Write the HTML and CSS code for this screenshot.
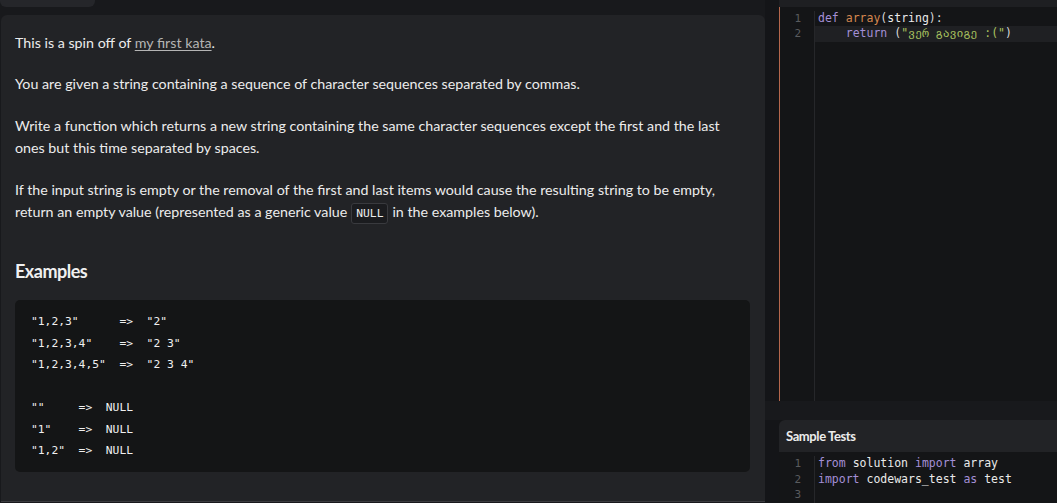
FILE: index.html
```html
<!DOCTYPE html>
<html>
<head>
<meta charset="utf-8">
<link rel="stylesheet" href="styles.css">
</head>
<body>
<div class="page">
  <div class="left">
    <div class="tab"></div>
    <div class="panel">
      <p>This is a spin off of <a class="link" href="#">my first kata</a>.</p>
      <p>You are given a string containing a sequence of character sequences separated by commas.</p>
      <p>Write a function which returns a new string containing the same character sequences except the first and the last ones but this time separated by spaces.</p>
      <p>If the input string is empty or the removal of the first and last items would cause the resulting string to be empty, return an empty value (represented as a generic value<code class="inline">NULL</code>in the examples below).</p>
      <h2 class="heading">Examples</h2>
      <pre class="block">"1,2,3"      =>  "2"
"1,2,3,4"    =>  "2 3"
"1,2,3,4,5"  =>  "2 3 4"

""     =>  NULL
"1"    =>  NULL
"1,2"  =>  NULL</pre>
    </div>
  </div>
  <div class="right">
    <div class="topbar"></div>
    <div class="editor">
      <div class="gutter"><div>1</div><div>2</div></div>
      <div class="code">
        <div class="line"><span class="kw">def</span> <span class="fn">array</span><span class="pn">(</span>string<span class="pn">):</span></div>
        <div class="line active">    <span class="kw">return</span> <span class="pn">(</span><span class="str">"ვერ გავიგე :("</span><span class="pn">)</span></div>
      </div>
    </div>
    <div class="gap"></div>
    <div class="tests">
      <div class="tests-head">Sample Tests</div>
      <div class="tests-body">
        <div class="gutter small"><div>1</div><div>2</div><div>3</div></div>
        <div class="code small">
          <div class="line"><span class="kw">from</span> solution <span class="kw">import</span> array</div>
          <div class="line"><span class="kw">import</span> codewars_test <span class="kw">as</span> test</div>
          <div class="line"> </div>
        </div>
      </div>
    </div>
  </div>
</div>
</body>
</html>
```

FILE: styles.css
```css
* { box-sizing: border-box; }
html, body { margin: 0; padding: 0; }
body {
  background: #18191c;
  width: 1057px;
  height: 503px;
  overflow: hidden;
  font-family: Lato, "Noto Sans", sans-serif;
}
.page {
  display: flex;
  height: 503px;
}
.left {
  width: 765px;
  flex-shrink: 0;
  padding-left: 1px;
  display: flex;
  flex-direction: column;
}
.tab {
  width: 95px;
  height: 7px;
  background: #25262a;
  border-radius: 0 0 6px 6px;
  margin-left: -1px;
}
.panel {
  margin-top: 8px;
  height: 487px;
  background: #222326;
  border-radius: 6px 6px 0 0;
  border-bottom: 1px solid #3a3b3f;
  padding: 17px 15px 0 14px;
  color: #ececec;
  font-size: 14.25px;
  line-height: 22.4px;
}
.panel p { margin: 0 0 19px; }
.link { color: #b4b4b4; text-decoration: underline; text-underline-offset: 2px; }
.inline {
  display: inline-block;
  font-family: "DejaVu Sans Mono", monospace;
  font-size: 11.3px;
  line-height: 15px;
  background: #1b1c1f;
  border: 1px solid #393a3e;
  border-radius: 3px;
  padding: 2px 4px;
  margin: 0 4px;
  vertical-align: 0;
  color: #ececec;
}
.heading {
  margin: 36px 0 17px;
  font-size: 18px;
  font-weight: 700;
  line-height: 23px;
  letter-spacing: -0.5px;
  color: #f0f0f0;
}
.block {
  margin: 0;
  background: #141516;
  border-radius: 5px;
  padding: 11px 16px 10px;
  height: 172px;
  font-family: "DejaVu Sans Mono", monospace;
  font-size: 11.3px;
  line-height: 21.5px;
  color: #f0f0f0;
}
.right {
  flex: 1;
  background: #141518;
  display: flex;
  flex-direction: column;
  padding-left: 14px;
}
.topbar {
  height: 7px;
  flex-shrink: 0;
  background: #1e1f22;
}
.editor {
  height: 394px;
  flex-shrink: 0;
  background: #141517;
  border-left: 1px solid #b5674c;
  display: flex;
  padding-top: 4px;
}
.gutter {
  width: 35px;
  border-right: 1px solid #26272a;
  text-align: right;
  padding-right: 13px;
  color: #5a5b5e;
  font-family: "DejaVu Sans Mono", monospace;
  font-size: 11px;
  line-height: 15px;
}
.code {
  flex: 1;
  font-family: "DejaVu Sans Mono", "DejaVu Sans", monospace;
  font-size: 11.5px;
  line-height: 15px;
  color: #eaeaea;
}
.line { padding-left: 3px; height: 15px; white-space: pre; }
.line.active { background: #1f2023; height: 16px; }
.kw { color: #a48fd6; }
.fn { color: #d3864f; }
.pn { color: #d8d8d8; }
.str { color: #a9c25f; }
.gap {
  height: 19px;
  flex-shrink: 0;
  background: #18191c;
  margin-left: -14px;
}
.tests {
  flex: 1;
  display: flex;
  flex-direction: column;
  background: #141517;
}
.tests-head {
  height: 32px;
  flex-shrink: 0;
  background: #222326;
  border-radius: 6px 0 0 0;
  padding-left: 7px;
  font-size: 13px;
  font-weight: 700;
  letter-spacing: -0.4px;
  line-height: 32px;
  color: #ececec;
}
.tests-body {
  flex: 1;
  display: flex;
  padding-top: 4px;
}
.small { line-height: 15.5px; }
.small .line { height: 15.5px; }
.gutter.small { width: 36px; }
```
